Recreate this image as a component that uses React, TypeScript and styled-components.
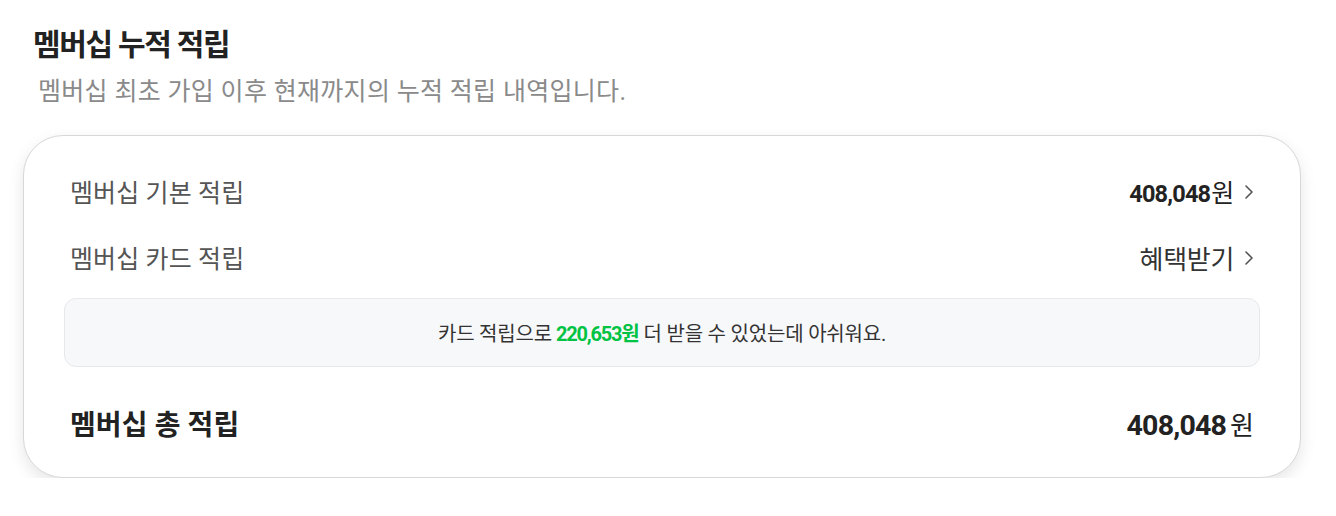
import React from "react"
import styled, { createGlobalStyle } from "styled-components"

const GlobalStyle = createGlobalStyle`
	body {
		margin: 0;
		background: #fff;
		font-family: Roboto, "Noto Sans CJK KR", sans-serif;
	}
`

const Page = styled.div`
	padding: 22px 35px 0 23px;
	width: 1278px;
`

const Header = styled.div`
	padding-left: 10px;
	margin-bottom: 25px;
`

const Title = styled.h2`
	margin: 0;
	font-size: 30px;
	line-height: 46px;
	font-weight: 700;
	letter-spacing: -1.3px;
	color: #222;
`

const Subtitle = styled.p`
	margin: 6px 0 0;
	padding-left: 5px;
	font-size: 25px;
	line-height: 36px;
	font-weight: 400;
	letter-spacing: 0.3px;
	color: #8a8a8a;
`

const Card = styled.section`
	box-sizing: border-box;
	padding: 22px 40px 16px;
	border: 1px solid #d8d8d8;
	border-radius: 40px;
	background: #fff;
	box-shadow: 0 6px 16px rgba(0, 0, 0, 0.1);
`

const Row = styled.div<{ $height: number }>`
	display: flex;
	align-items: center;
	justify-content: space-between;
	height: ${p => p.$height}px;
	padding: 0 6px;
`

const Label = styled.span<{ $strong?: boolean }>`
	font-size: ${p => (p.$strong ? 28 : 25)}px;
	font-weight: ${p => (p.$strong ? 700 : 400)};
	color: ${p => (p.$strong ? "#222" : "#555")};
	letter-spacing: 0.1px;
`

const ValueLink = styled.a`
	display: flex;
	align-items: center;
	gap: 10px;
	color: #333;
	text-decoration: none;
	font-size: 26px;
	letter-spacing: -0.3px;
	cursor: pointer;

	svg {
		margin-top: 1px;
	}
`

const Amount = styled.span<{ $size: number }>`
	font-family: Roboto, "Noto Sans CJK KR", sans-serif;
	font-size: ${p => p.$size}px;
	font-weight: 700;
	letter-spacing: -0.8px;
	color: #222;
`

const Unit = styled.span<{ $size: number }>`
	font-size: ${p => p.$size}px;
	font-weight: 400;
	color: #222;
	margin-left: 1px;
`

const Total = styled.div`
	display: flex;
	align-items: baseline;
	gap: 3px;
`

const Notice = styled.div`
	display: flex;
	align-items: center;
	justify-content: center;
	height: 67px;
	margin-top: 8px;
	margin-bottom: 18px;
	border: 1px solid #e6e8eb;
	border-radius: 12px;
	background: #f7f8fa;
	font-size: 20px;
	letter-spacing: -0.2px;
	color: #333;
`

const Highlight = styled.strong`
	color: #00c344;
	font-weight: 700;
	margin: 0 5px 0 4px;
	letter-spacing: -1.2px;
`

const Chevron = () => (
	<svg width="10" height="16" viewBox="0 0 10 16" fill="none">
		<polyline points="2,2 8,8 2,14" stroke="#555" strokeWidth="1.6" strokeLinecap="round" strokeLinejoin="round" />
	</svg>
)

const App = () => {
	return (
		<Page>
			<GlobalStyle />
			<Header>
				<Title>멤버십 누적 적립</Title>
				<Subtitle>멤버십 최초 가입 이후 현재까지의 누적 적립 내역입니다.</Subtitle>
			</Header>
			<Card>
				<Row $height={66}>
					<Label>멤버십 기본 적립</Label>
					<ValueLink>
						<span>
							<Amount $size={23.5}>408,048</Amount>
							<Unit $size={25}>원</Unit>
						</span>
						<Chevron />
					</ValueLink>
				</Row>
				<Row $height={66}>
					<Label>멤버십 카드 적립</Label>
					<ValueLink>
						혜택받기
						<Chevron />
					</ValueLink>
				</Row>
				<Notice>
					카드 적립으로<Highlight>220,653원</Highlight>더 받을 수 있었는데 아쉬워요.
				</Notice>
				<Row $height={76}>
					<Label $strong>멤버십 총 적립</Label>
					<Total>
						<Amount $size={28.5}>408,048</Amount>
						<Unit $size={26}>원</Unit>
					</Total>
				</Row>
			</Card>
		</Page>
	)
}

export default App
